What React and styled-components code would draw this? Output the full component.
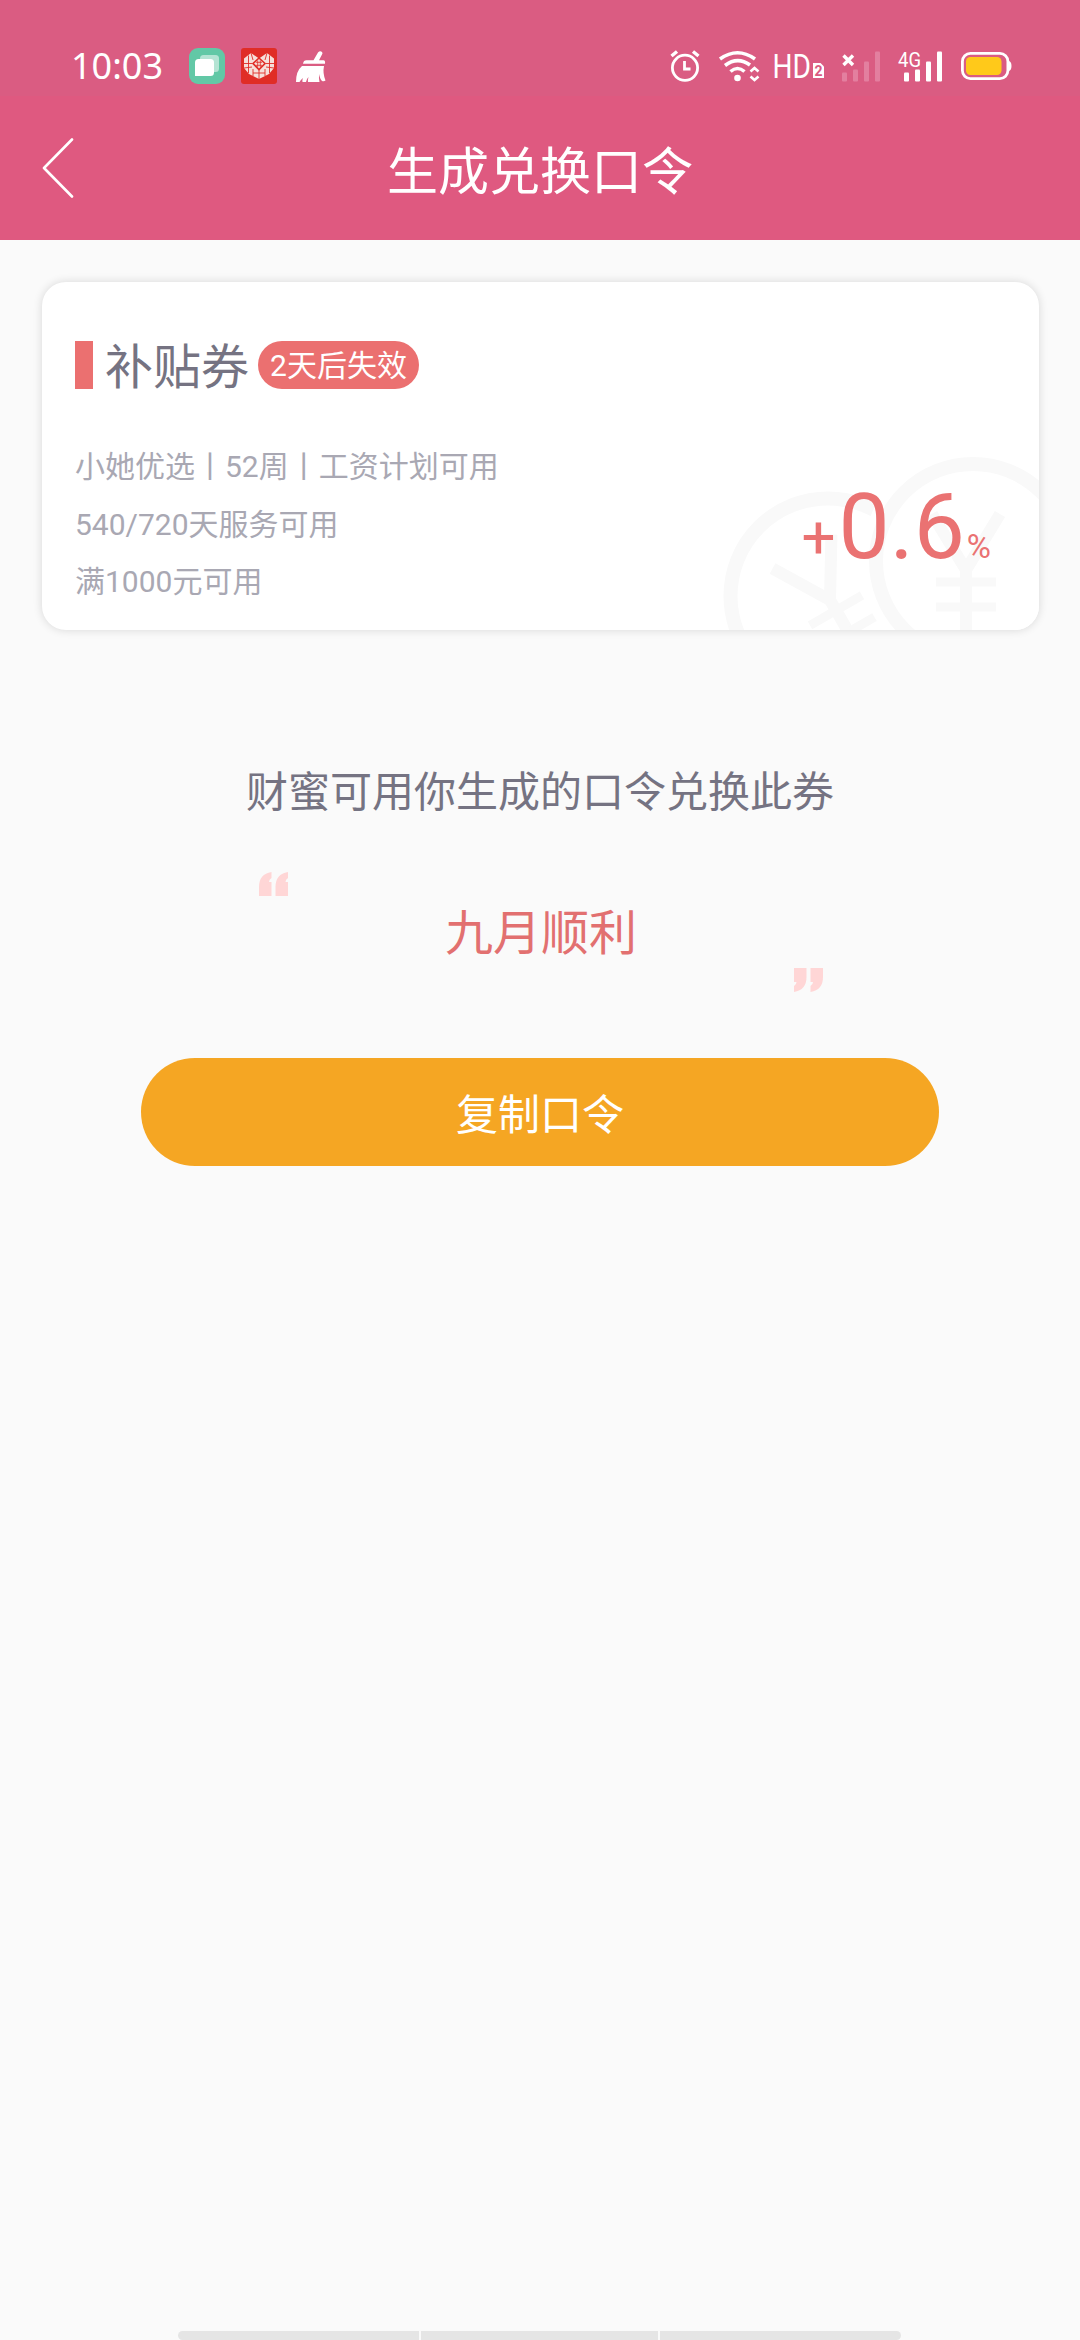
import React from "react"
import styled, { createGlobalStyle } from "styled-components"

const GlobalStyle = createGlobalStyle`
  * {
    box-sizing: border-box;
  }
  body {
    margin: 0;
    background-color: #fafafa;
    font-family: Roboto, "Noto Sans CJK SC", sans-serif;
  }
`

const AppsIcon = () => (
  <svg width="36" height="36" viewBox="0 0 36 36">
    <rect width="36" height="36" rx="9" fill="#62c8a6" />
    <rect x="11" y="7" width="19" height="17" rx="3.5" fill="#b5e4d4" />
    <path d="M9.500 11 H21.500 Q25 11 25 14.500 V24.500 Q25 28 21.500 28 H6 V14.500 Q6 11 9.500 11Z" fill="#fff" />
  </svg>
)

const HeartIcon = () => (
  <svg width="36" height="36" viewBox="0 0 36 36">
    <rect width="36" height="36" rx="3" fill="#e02d26" />
    <path d="M3 10.500 L10 5 L18 10.500 L26 5 L33 10.500 V20 L28 26 L18 31 L8 26 L3 20Z" fill="#f6e0da" />
    <path
      d="M7.500 7.500 V25 M28.500 7.500 V25 M3 15.500 H11 M25 15.500 H33 M10 5 L12 12 M26 5 L24 12 M3 20 L11 19 M33 20 L25 19 M12 21 V28 M24 21 V28 M18 22 V31 M12 25 H24"
      stroke="#e02d26"
      strokeWidth="0.9"
      fill="none"
    />
    <path d="M18 10 L24 15.500 L18 21.500 L12 15.500Z" fill="none" stroke="#e02d26" strokeWidth="1.6" />
    <path d="M15 14.300 H21 M15 17.300 H21 M16.700 12.500 V19 M19.300 12.500 V19" stroke="#e02d26" strokeWidth="0.8" />
  </svg>
)

const BroomIcon = () => (
  <svg width="30" height="31" viewBox="0 0 30 31" fill="#fff">
    <path d="M22 1.500 Q24 -0.500 26 1 Q27 2 26 3.500 L23 9.300 H27.500 Q29.500 9.500 29 12.700 H7 Q7.500 9.300 10.500 9.300 H17.500Z" />
    <path d="M6 15 H28 Q26.500 22 29.500 29.500 Q28 30.800 26 30 Q23.800 28 23.300 23 Q22.500 27 23.500 31 H12 Q11.600 29 12.500 26 Q10.500 28 10 31 H6.500 Q6 29 7 27 Q4.500 29 3.500 31 H0 Q0 20 6 15Z" />
  </svg>
)

const AlarmIcon = () => (
  <svg width="32" height="32" viewBox="0 0 32 32" fill="none" stroke="#fff" strokeWidth="2.800">
    <circle cx="15" cy="17.800" r="12.600" />
    <path d="M14.500 11 V19 H20.500" />
    <path d="M1.500 6 L7 1.500 M23 1.500 L28.500 6" strokeWidth="3.400" />
  </svg>
)

const WifiIcon = () => (
  <svg width="38" height="31" viewBox="0 0 38 31" fill="none" stroke="#fff">
    <path d="M1 8 Q18.500 -4.500 36 8" strokeWidth="3.600" />
    <path d="M6 14.500 Q18.500 5 31 14" strokeWidth="3.600" />
    <path d="M11.500 20.500 Q18.500 14.500 25.500 20.500" strokeWidth="3.600" />
    <circle cx="18.500" cy="27" r="3.300" fill="#fff" stroke="none" />
    <path d="M31.500 20.500 L35.500 17 L39.500 20.500 M31.500 25.500 L35.500 29 L39.500 25.500" strokeWidth="2.600" />
  </svg>
)

const HdIcon = () => (
  <svg width="51" height="26" viewBox="0 0 51 26" fill="#fff">
    <text x="-1.500" y="25" fontSize="33" fontFamily="Roboto" textLength="38.500" lengthAdjust="spacingAndGlyphs">
      HD
    </text>
    <path d="M39 10 H46.500 L50 13.500 V25 H39Z" />
    <text x="40.500" y="23" fontSize="14" fontWeight="700" fontFamily="Roboto" fill="#da5c82">
      2
    </text>
  </svg>
)

const NoSignalIcon = () => (
  <svg width="39" height="31" viewBox="0 0 39 31">
    <g fill="#e37f9f">
      <rect y="21.500" width="5" height="9" rx="1" />
      <rect x="11" y="18.500" width="5" height="12" rx="1" />
      <rect x="22" y="10.500" width="5" height="20" rx="1" />
      <rect x="33" y="0.500" width="5" height="30" rx="1" />
    </g>
    <path d="M1.500 4.500 L11 14 M11 4.500 L1.500 14" stroke="#fff" strokeWidth="3.400" />
  </svg>
)

const SignalIcon = () => (
  <svg width="44" height="31" viewBox="0 0 44 31" fill="#fff">
    <text x="0" y="15.500" fontSize="20" fontFamily="Roboto" textLength="23" lengthAdjust="spacingAndGlyphs">
      4G
    </text>
    <rect x="6" y="21.500" width="5" height="9" rx="1" />
    <rect x="17" y="18.500" width="5" height="12" rx="1" />
    <rect x="28" y="10.500" width="5" height="20" rx="1" />
    <rect x="39" y="0.500" width="5" height="30" rx="1" />
  </svg>
)

const BatteryIcon = () => (
  <svg width="51" height="28" viewBox="0 0 51 28">
    <rect x="1.400" y="1.400" width="45.500" height="25.200" rx="8" fill="none" stroke="#fff" strokeWidth="2.800" />
    <rect x="5" y="5" width="35.500" height="18" rx="4.500" fill="#ffc91a" />
    <path d="M47 9 Q50.500 9 50.500 14 Q50.500 19 47 19Z" fill="#fff" />
  </svg>
)

const BackIcon = () => (
  <svg width="32" height="60" viewBox="0 0 32 60" fill="none" stroke="#fff" strokeWidth="2.600" strokeLinecap="round" strokeLinejoin="round">
    <path d="M30 1.500 L2 30 L30 58.500" />
  </svg>
)

const QuoteIcon = () => (
  <svg width="30" height="24" viewBox="0 0 30 24" fill="#ffd6d6">
    <path d="M0 24 V15 Q0 2 12.500 0 V6 Q10 7.500 10 10 H12.500 V24Z" />
    <path d="M16.500 24 V15 Q16.500 2 29 0 V6 Q26.500 7.500 26.500 10 H29 V24Z" />
  </svg>
)

const Yuan = ({ transform }) => (
  <g transform={transform}>
    <path d="M-34 -56 L0 0 L34 -56 M0 0 V80" strokeWidth="12" />
    <path d="M-30 12 H30 M-30 37 H30" strokeWidth="9" />
  </g>
)

const Coins = () => (
  <CoinsSvg viewBox="0 0 320 174" fill="none" stroke="#f9f9f9" strokeWidth="14">
    <circle cx="109" cy="140" r="97.500" />
    <Yuan transform="translate(111 144) rotate(-30)" />
    <circle cx="254" cy="105" r="112" fill="#fff" stroke="none" />
    <circle cx="254" cy="105" r="97" />
    <Yuan transform="translate(247 114)" />
  </CoinsSvg>
)

const App = () => (
  <Page>
    <GlobalStyle />
    <StatusBar>
      <StatusGroup $gap="16px">
        <Clock>10:03</Clock>
        <AppsIcon />
        <HeartIcon />
        <IconSlot $left="3px">
          <BroomIcon />
        </IconSlot>
      </StatusGroup>
      <StatusGroup $gap="17px">
        <AlarmIcon />
        <WifiIcon />
        <HdIcon />
        <NoSignalIcon />
        <SignalIcon />
        <IconSlot $left="2px">
          <BatteryIcon />
        </IconSlot>
      </StatusGroup>
    </StatusBar>
    <Header>
      <BackButton aria-label="返回">
        <BackIcon />
      </BackButton>
      <Title>生成兑换口令</Title>
    </Header>
    <Coupon>
      <Coins />
      <CouponInfo>
        <CouponHead>
          <Marker />
          <CouponName>补贴券</CouponName>
          <Badge>2天后失效</Badge>
        </CouponHead>
        <Terms>
          <li>小她优选丨52周丨工资计划可用</li>
          <li>540/720天服务可用</li>
          <li>满1000元可用</li>
        </Terms>
      </CouponInfo>
      <Rate>
        <Plus>+</Plus>
        <Amount>0.6</Amount>
        <Percent>%</Percent>
      </Rate>
    </Coupon>
    <Hint>财蜜可用你生成的口令兑换此券</Hint>
    <Phrase>
      <QuoteIcon />
      <PhraseText>九月顺利</PhraseText>
      <ClosingQuote>
        <QuoteIcon />
      </ClosingQuote>
    </Phrase>
    <CopyButton>复制口令</CopyButton>
    <NavBar>
      <NavHandle />
      <NavHandle />
      <NavHandle />
    </NavBar>
  </Page>
)

const Page = styled.div`
  display: flex;
  flex-direction: column;
  width: 1080px;
  height: 2340px;
  overflow: hidden;
  background-color: #fafafa;
  svg {
    display: block;
    flex: none;
  }
`

const StatusBar = styled.div`
  display: flex;
  justify-content: space-between;
  height: 96px;
  padding: 36px 68px 0 71px;
  background-color: #da5c82;
  svg {
    overflow: visible;
  }
`

const StatusGroup = styled.div`
  display: flex;
  align-items: center;
  gap: ${props => props.$gap};
  height: 60px;
`

const Clock = styled.span`
  width: 102px;
  font-family: "Noto Sans", sans-serif;
  font-size: 36px;
  line-height: 60px;
  color: #fff;
`

const IconSlot = styled.div`
  padding-left: ${props => props.$left};
`

const Header = styled.header`
  display: grid;
  grid-template-columns: 120px 1fr 120px;
  align-items: center;
  height: 144px;
  background-color: #df5980;
`

const BackButton = styled.button`
  padding: 0 0 0 42px;
  border: 0;
  background: none;
`

const Title = styled.h1`
  margin: 9px 0 0;
  font-size: 51px;
  font-weight: 400;
  line-height: 72px;
  text-align: center;
  color: #fff;
`

const Coupon = styled.section`
  position: relative;
  display: flex;
  justify-content: space-between;
  width: 997px;
  height: 348px;
  margin: 42px 0 0 42px;
  border-radius: 24px;
  background-color: #fff;
  box-shadow: 0 0 10px rgba(0, 0, 0, 0.14);
  overflow: hidden;
`

const CoinsSvg = styled.svg`
  position: absolute;
  right: 0;
  bottom: 0;
  width: 320px;
  height: 174px;
`

const CouponInfo = styled.div`
  padding: 59px 0 0 33px;
`

const CouponHead = styled.div`
  display: flex;
  align-items: center;
  height: 48px;
`

const Marker = styled.span`
  width: 18px;
  height: 48px;
  background-color: #eb7070;
`

const CouponName = styled.h2`
  margin: 0 9px 0 12px;
  padding-top: 6px;
  font-size: 48px;
  font-weight: 400;
  line-height: 48px;
  color: #757382;
`

const Badge = styled.span`
  height: 48px;
  padding: 0 12px;
  border-radius: 24px;
  background-color: #eb7070;
  font-size: 30px;
  line-height: 50px;
  color: #fff;
`

const Terms = styled.ul`
  list-style: none;
  margin: 49px 0 0;
  padding: 0;
  li {
    font-size: 30px;
    line-height: 57.5px;
    white-space: nowrap;
    color: #a9a8b3;
  }
`

const Rate = styled.div`
  position: relative;
  display: flex;
  align-items: baseline;
  padding: 192px 48px 0 0;
  color: #ea7272;
`

const Plus = styled.span`
  margin-right: 3px;
  font-size: 60px;
`

const Amount = styled.span`
  font-size: 91px;
  line-height: 107px;
`

const Percent = styled.span`
  margin-left: 2px;
  font-size: 33px;
`

const Hint = styled.p`
  margin: 131px 0 0;
  font-size: 42px;
  line-height: 64px;
  text-align: center;
  color: #757382;
`

const Phrase = styled.div`
  display: grid;
  grid-template-columns: 30px 1fr 30px;
  width: 564px;
  height: 120px;
  margin: 47px 0 0 259px;
`

const PhraseText = styled.p`
  margin: 26px 0 0;
  font-size: 48px;
  line-height: 72px;
  text-align: center;
  color: #e27070;
`

const ClosingQuote = styled.div`
  align-self: end;
  transform: rotate(180deg);
`

const CopyButton = styled.button`
  width: 798px;
  height: 108px;
  margin: 66px 0 0 141px;
  padding: 0 0 2px;
  border: 0;
  border-radius: 54px;
  background-color: #f5a623;
  font-family: inherit;
  font-size: 42px;
  color: #fff;
`

const NavBar = styled.div`
  display: grid;
  grid-template-columns: 241px 237px 241px;
  gap: 2px;
  width: 723px;
  height: 9px;
  margin: auto 0 0 178px;
  border-radius: 5px;
  overflow: hidden;
`

const NavHandle = styled.span`
  background-color: #e5e5e5;
`

export default App
